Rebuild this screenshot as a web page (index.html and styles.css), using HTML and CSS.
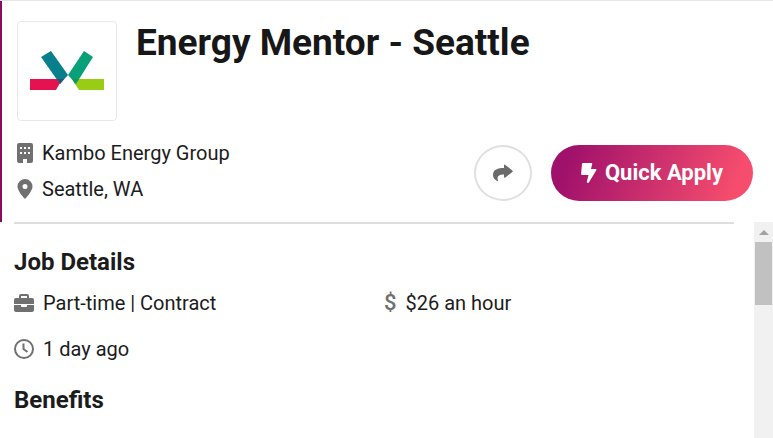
FILE: index.html
```html
<!DOCTYPE html>
<html lang="en">
<head>
    <meta charset="UTF-8">
    <meta name="viewport" content="width=device-width, initial-scale=1.0">
    <title>Energy Mentor - Seattle</title>
    <link rel="stylesheet" href="styles.css">
</head>
<body>
    <header class="job-header">
        <div class="job-top">
            <div class="logo">
                <svg viewBox="0 0 98 98" role="img" aria-label="Kambo Energy Group">
                    <path fill="#e4134f" d="M12 57h27l3 4-4 7H12z"/>
                    <path fill="#99cc14" d="M86 57H61l-4 5 4 6h25z"/>
                    <path fill="#087f8c" d="M23 35l10-6 17 24-8 9z"/>
                    <path fill="#07a078" d="M66 29l9 6-17 27-8-9z"/>
                    <path fill="#31506f" d="M39 57h7l-4 5z"/>
                    <path fill="#159653" d="M54 57h7l-4 5z"/>
                </svg>
            </div>
            <h1>Energy Mentor - Seattle</h1>
        </div>

        <div class="job-summary">
            <ul class="company-info">
                <li>
                    <svg class="icon" viewBox="0 0 16 20" aria-hidden="true">
                        <path fill-rule="evenodd" d="M2 0h12q2 0 2 2v16q0 2-2 2h-4v-4H6v4H2q-2 0-2-2V2q0-2 2-2zM3 4v2h2V4zm4 0v2h2V4zm4 0v2h2V4zM3 9v2h2V9zm4 0v2h2V9zm4 0v2h2V9z"/>
                    </svg>
                    Kambo Energy Group
                </li>
                <li>
                    <svg class="icon" viewBox="0 0 16 20" aria-hidden="true">
                        <path fill-rule="evenodd" d="M8 0a7.500 7.500 0 0 1 7.500 7.500C15.500 11 11 17 8 20 5 17 .5 11 .5 7.500A7.500 7.500 0 0 1 8 0zm0 5a2.500 2.500 0 1 0 0 5 2.500 2.500 0 0 0 0-5z"/>
                    </svg>
                    Seattle, WA
                </li>
            </ul>
            <div class="actions">
                <button class="share-btn" type="button" aria-label="Share">
                    <svg viewBox="0 0 20 18" aria-hidden="true">
                        <path d="M11 1.500Q11 0 12.300.9l7 5.500q.9.800 0 1.600l-7 5.500Q11 14.300 11 12.800V10.500C6 10.300 3.500 12 5 16.500q.2 1.200-.9.600C1.500 15.500 0 13.500 0 11 0 5.500 5 4 11 4z"/>
                    </svg>
                </button>
                <button class="apply-btn" type="button">
                    <svg viewBox="0 0 16 20" aria-hidden="true">
                        <path d="M2 0h8.500q1 0 .7 1L10 6h4.500q1.500 0 .8 1.300L8 19.300q-1 1.200-2 .2-.3-.4-.1-1L7.500 12H1.500Q0 12 .1 10.600L1 1q.1-1 1-1z"/>
                    </svg>
                    Quick Apply
                </button>
            </div>
        </div>
    </header>

    <div class="job-body">
        <main class="details">
            <h2>Job Details</h2>
            <ul class="detail-list">
                <li>
                    <svg class="icon" viewBox="0 0 20 18" aria-hidden="true">
                        <path fill-rule="evenodd" d="M5 4V2q0-2 2-2h6q2 0 2 2v2h3q2 0 2 2v4H0V6q0-2 2-2zm2 0h6V2H7zM0 11h7v1q0 1 1 1h4q1 0 1-1v-1h7v5q0 2-2 2H2q-2 0-2-2z"/>
                    </svg>
                    Part-time | Contract
                </li>
                <li>
                    <span class="dollar" aria-hidden="true">$</span>
                    $26 an hour
                </li>
                <li>
                    <svg class="icon line-icon" viewBox="0 0 20 20" aria-hidden="true">
                        <circle cx="10" cy="10" r="9"/>
                        <path d="M9.500 4.500V10l4 3"/>
                    </svg>
                    1 day ago
                </li>
            </ul>
            <h2>Benefits</h2>
        </main>
        <div class="scrollbar">
            <button class="scroll-up" type="button" aria-label="Scroll up">
                <svg viewBox="0 0 10 5" aria-hidden="true"><path d="M5 0l5 5H0z"/></svg>
            </button>
            <div class="scroll-thumb"></div>
        </div>
    </div>
</body>
</html>
```

FILE: styles.css
```css
* {
    box-sizing: border-box;
}
body {
    margin: 0;
    min-height: 100vh;
    display: flex;
    flex-direction: column;
    font-family: Roboto, "Liberation Sans", sans-serif;
    font-size: 20px;
    line-height: 24px;
    color: #1c1c1c;
    background-color: #fff;
    border-top: 1px solid #e6e6e6;
}
h1, h2, ul {
    margin: 0;
    padding: 0;
}
ul {
    list-style: none;
}
button {
    font: inherit;
    border: none;
    padding: 0;
    cursor: pointer;
}
.icon {
    height: 20px;
    fill: #707070;
}
.job-header {
    border-left: 2px solid #8c0a5b;
    padding: 20px 20px 11px 15px;
}
.job-top {
    display: flex;
    gap: 19px;
}
.logo {
    width: 100px;
    height: 100px;
    flex-shrink: 0;
    border: 1px solid #e8e8e8;
    border-radius: 4px;
}
.logo svg {
    display: block;
}
h1 {
    font-size: 37px;
    line-height: 44px;
    color: #171717;
}
.job-summary {
    display: flex;
    justify-content: space-between;
    align-items: center;
    margin-top: 14px;
}
.company-info {
    padding-bottom: 4px;
}
.company-info li {
    display: flex;
    align-items: center;
    gap: 9px;
    line-height: 36px;
}
.company-info .icon {
    width: 16px;
}
.actions {
    display: flex;
    gap: 19px;
}
.share-btn {
    display: flex;
    align-items: center;
    justify-content: center;
    width: 58px;
    height: 56px;
    border: 2px solid #e0e0e0;
    border-radius: 50%;
    background-color: #fff;
}
.share-btn svg {
    width: 20px;
    fill: #6b6b6b;
}
.apply-btn {
    display: flex;
    align-items: center;
    gap: 8px;
    height: 56px;
    padding: 0 30px;
    border-radius: 28px;
    background: linear-gradient(110deg, #a0116b 10%, #f64d6e 90%);
    color: #fff;
    font-size: 22px;
    font-weight: bold;
}
.apply-btn svg {
    width: 16px;
    fill: #fff;
}
.job-body {
    flex: 1;
    display: flex;
}
.details {
    flex: 1;
    padding-left: 14px;
}
.details::before {
    content: "";
    display: block;
    height: 2px;
    margin: 0 20px 22px 0;
    background-color: #dedede;
}
h2 {
    font-size: 24px;
    line-height: 32px;
}
.detail-list {
    display: grid;
    grid-template-columns: 1fr 1fr;
    row-gap: 22px;
    margin: 13px 0 23px;
}
.detail-list li {
    display: flex;
    align-items: center;
    gap: 9px;
}
.detail-list .icon {
    width: 20px;
}
.detail-list .line-icon {
    fill: none;
    stroke: #707070;
    stroke-width: 2;
}
.dollar {
    color: #707070;
    font-size: 22px;
    font-weight: 500;
}
.scrollbar {
    width: 19px;
    background-color: #f1f1f1;
}
.scroll-up {
    display: flex;
    align-items: center;
    justify-content: center;
    width: 100%;
    height: 20px;
    background: none;
}
.scroll-up svg {
    width: 10px;
    fill: #a3a3a3;
}
.scroll-thumb {
    height: 63px;
    margin: 0 1px;
    background-color: #c1c1c1;
}
```
